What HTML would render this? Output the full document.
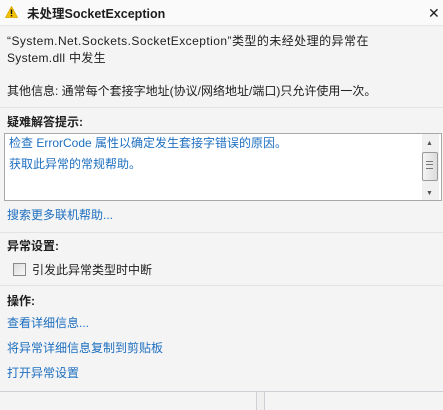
<!DOCTYPE html>
<html><head><meta charset="utf-8"><style>
body{margin:0;width:443px;height:410px;background:#f4f4f4;font-family:"Liberation Sans","Noto Sans CJK SC",sans-serif;font-size:12px;color:#1e1e1e;position:relative;overflow:hidden}
.a{position:absolute;white-space:nowrap;line-height:16px}
.b{font-weight:bold}
.l{color:#1e6fc0}
.hr{position:absolute;left:0;width:443px;height:1px;background:#e3e3e3}
</style></head><body>
<div style="position:absolute;left:0;top:0;width:443px;height:25px;background:#fafafa;border-bottom:1px solid #e6e6e6"></div>
<svg style="position:absolute;left:5px;top:6px" width="13" height="12"><path d="M6.5 0.5L12.5 11.5H0.5Z" fill="#f5c400" stroke="#d9a800" stroke-width="0.8"/><rect x="5.8" y="3.5" width="1.4" height="4.5" fill="#111"/><rect x="5.8" y="9" width="1.4" height="1.4" fill="#111"/></svg>
<div class="a b" style="left:27px;top:6px;font-size:12.5px">未处理SocketException</div>
<div class="a" style="left:428px;top:5px;font-size:14px">✕</div>
<div class="a" style="left:7px;top:33px;letter-spacing:0.45px">“System.Net.Sockets.SocketException”类型的未经处理的异常在</div>
<div class="a" style="left:7px;top:50px;letter-spacing:0.3px">System.dll 中发生</div>
<div class="a" style="left:7px;top:83px">其他信息: 通常每个套接字地址(协议/网络地址/端口)只允许使用一次。</div>
<div class="hr" style="top:107px"></div>
<div class="a b" style="left:7px;top:114px">疑难解答提示:</div>
<div style="position:absolute;left:4px;top:133px;width:436px;height:66px;background:#fff;border:1px solid #a8a8a8"></div>
<div style="position:absolute;left:422px;top:134px;width:17px;height:66px;background:#f0f0f0"></div>
<div class="a" style="left:426px;top:136px;font-size:7px;color:#555">▲</div>
<div style="position:absolute;left:422px;top:152px;width:14px;height:27px;border:1px solid #9a9a9a;border-radius:2px;background:linear-gradient(90deg,#f4f4f4,#dcdcdc)"></div>
<div style="position:absolute;left:426px;top:161px;width:7px;height:6px;border-top:1px solid #777;border-bottom:1px solid #777"></div>
<div style="position:absolute;left:426px;top:164px;width:7px;height:1px;background:#777"></div>
<div class="a" style="left:426px;top:186px;font-size:7px;color:#555">▼</div>
<div class="a l" style="left:9px;top:135px">检查 ErrorCode 属性以确定发生套接字错误的原因。</div>
<div class="a l" style="left:9px;top:156px">获取此异常的常规帮助。</div>
<div class="a l" style="left:7px;top:207px">搜索更多联机帮助...</div>
<div class="hr" style="top:232px"></div>
<div class="a b" style="left:7px;top:238px">异常设置:</div>
<div style="position:absolute;left:13px;top:263px;width:11px;height:11px;border:1px solid #8a8a8a;background:linear-gradient(135deg,#ddd,#f8f8f8)"></div>
<div class="a" style="left:32px;top:262px">引发此异常类型时中断</div>
<div class="hr" style="top:285px"></div>
<div class="a b" style="left:7px;top:293px">操作:</div>
<div class="a l" style="left:7px;top:315px">查看详细信息...</div>
<div class="a l" style="left:7px;top:340px">将异常详细信息复制到剪贴板</div>
<div class="a l" style="left:7px;top:365px">打开异常设置</div>
<div style="position:absolute;left:0;top:391px;width:443px;height:1px;background:#cfcfd6"></div>
<div style="position:absolute;left:256px;top:392px;width:7px;height:18px;border-left:1px solid #cfcfd6;border-right:1px solid #cfcfd6;background:#f0f0f0"></div>
</body></html>
